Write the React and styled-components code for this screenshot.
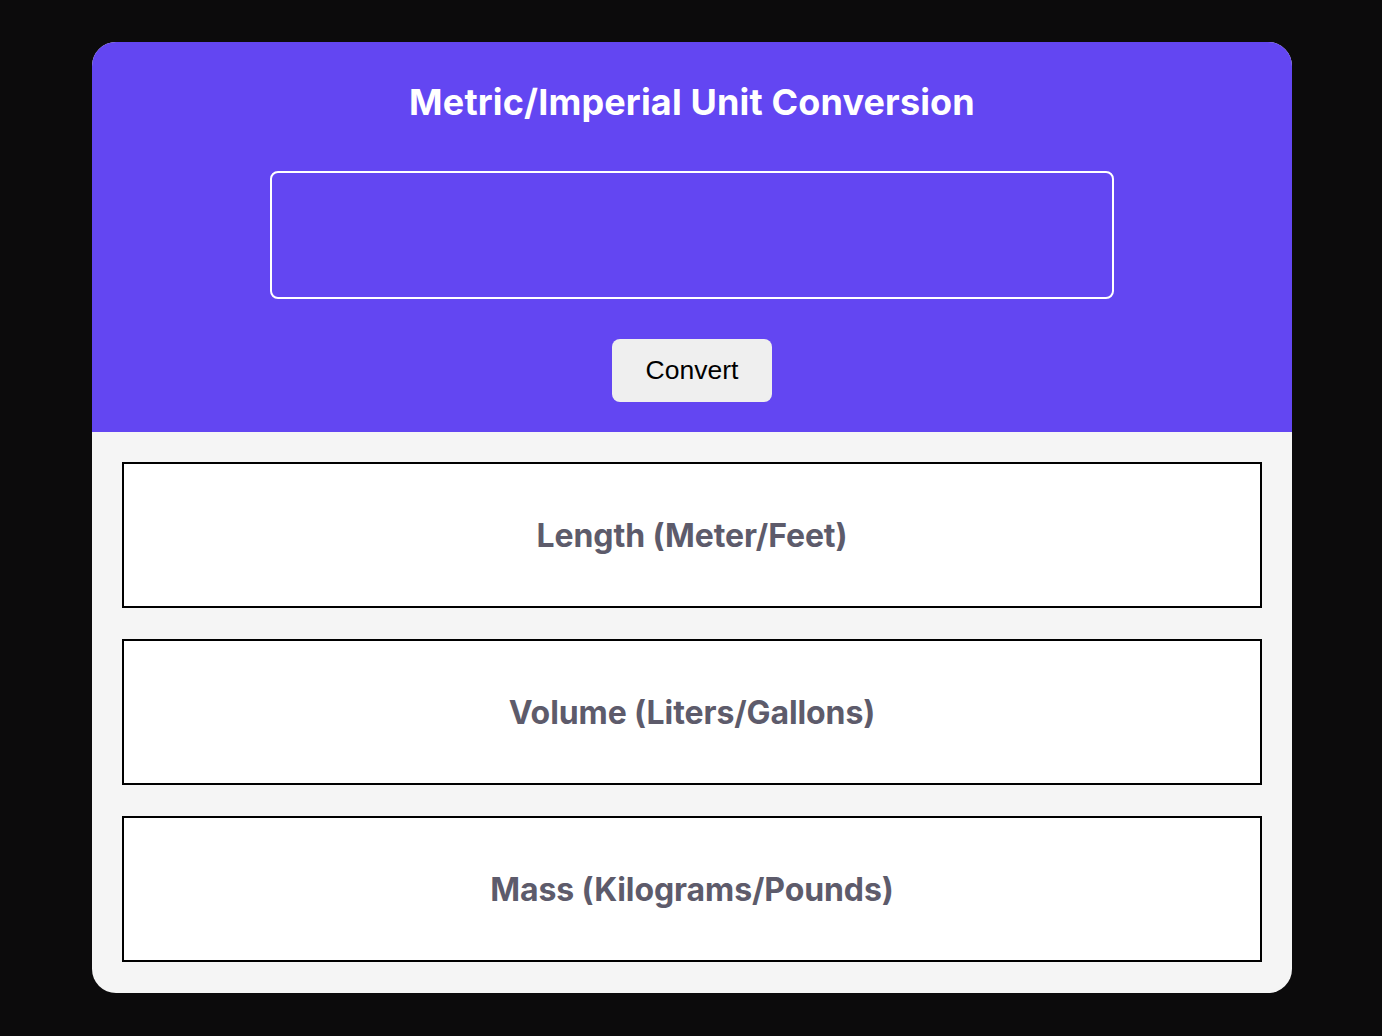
import React from "react";
import styled, { createGlobalStyle } from "styled-components";

const Global = createGlobalStyle`
  html, body { margin: 0; padding: 0; background: #0c0b0c; }
  body { font-family: Inter, "Liberation Sans", sans-serif; }
`;

const Page = styled.div`
  min-height: 1036px;
  box-sizing: border-box;
  padding: 42px 90px 43px 92px;
  display: flex;
  justify-content: center;
  align-items: flex-start;
`;

const Card = styled.div`
  width: 1200px;
  border-radius: 24px;
  overflow: hidden;
  background: #f5f5f5;
  display: flex;
  flex-direction: column;
`;

const Header = styled.div`
  background: #6346f2;
  height: 390px;
  box-sizing: border-box;
  padding-top: 38px;
  display: flex;
  flex-direction: column;
  align-items: center;
`;

const Title = styled.h1`
  margin: 0;
  font-family: Inter, sans-serif;
  font-weight: 700;
  font-size: 36px;
  line-height: 44px;
  color: #ffffff;
  letter-spacing: 0.15px;
`;

const Input = styled.input`
  margin-top: 47px;
  width: 844px;
  height: 128px;
  box-sizing: border-box;
  border: 2px solid #ffffff;
  border-radius: 8px;
  background: transparent;
  color: #ffffff;
  font-size: 24px;
  padding: 0 16px;
  outline: none;
`;

const Button = styled.button`
  margin-top: 40px;
  width: 160px;
  height: 63px;
  border: none;
  border-radius: 8px;
  background: #efefef;
  color: #000;
  font-family: "Liberation Sans", Arial, sans-serif;
  font-size: 26.5px;
  cursor: pointer;
`;

const List = styled.div`
  padding: 30px 30px 31px;
  display: flex;
  flex-direction: column;
  gap: 31px;
`;

const Result = styled.div`
  height: 146px;
  box-sizing: border-box;
  border: 2px solid #000;
  background: #fff;
  display: flex;
  align-items: center;
  justify-content: center;
  font-family: Inter, sans-serif;
  font-weight: 700;
  font-size: 32px;
  color: #5d5b6b;
  letter-spacing: -0.1px;
`;

export default function App() {
  return (
    <>
      <Global />
      <Page>
        <Card>
          <Header>
            <Title>Metric/Imperial Unit Conversion</Title>
            <Input type="text" />
            <Button>Convert</Button>
          </Header>
          <List>
            <Result>Length (Meter/Feet)</Result>
            <Result>Volume (Liters/Gallons)</Result>
            <Result>Mass (Kilograms/Pounds)</Result>
          </List>
        </Card>
      </Page>
    </>
  );
}
